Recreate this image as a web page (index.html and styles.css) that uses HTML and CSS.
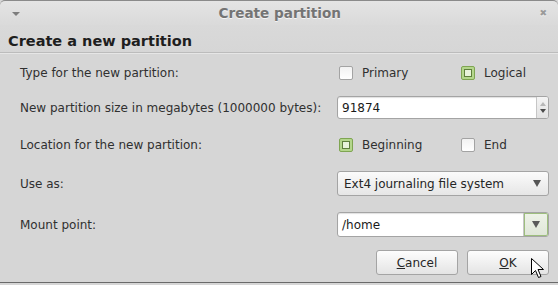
FILE: index.html
```html
<!DOCTYPE html>
<html>
    <head>
        <meta charset="utf-8">
        <title>Create partition</title>
        <link rel="stylesheet" href="styles.css">
    </head>
    <body>
        <div class="window">
            <div class="titlebar">
                <span class="menuArrow"></span>
                <span class="title">Create partition</span>
                <span class="close">&#10006;</span>
            </div>
            <div class="heading">Create a new partition</div>
            <div class="form">
                <div class="label">Type for the new partition:</div>
                <div class="options">
                    <span class="option"><span class="check"></span>Primary</span>
                    <span class="option"><span class="check on"></span>Logical</span>
                </div>

                <div class="label">New partition size in megabytes (1000000 bytes):</div>
                <div class="spin">
                    <span class="value">91874</span>
                    <span class="spinBtns">
                        <span class="up"></span>
                        <span class="down"></span>
                    </span>
                </div>

                <div class="label">Location for the new partition:</div>
                <div class="options">
                    <span class="option"><span class="check on"></span>Beginning</span>
                    <span class="option"><span class="check"></span>End</span>
                </div>

                <div class="label">Use as:</div>
                <div class="combo">
                    <span>Ext4 journaling file system</span>
                    <span class="arrow"></span>
                </div>

                <div class="label">Mount point:</div>
                <div class="comboEntry">
                    <span class="value">/home</span>
                    <span class="entryBtn"><span class="arrow"></span></span>
                </div>
            </div>
            <div class="buttons">
                <button class="btn"><u>C</u>ancel</button>
                <button class="btn"><u>O</u>K</button>
                <svg class="cursor" width="13" height="21" viewBox="0 0 13 21">
                    <path d="M0.5 0.5 L0.5 16.5 L4.5 12.5 L7.5 19.5 L10 18.5 L7 11.5 L12.5 11.5 Z" fill="#fff" stroke="#000" stroke-width="1"/>
                </svg>
            </div>
            <div class="below">
                <span>Device for boot loader installation:</span>
            </div>
        </div>
    </body>
</html>
```

FILE: styles.css
```css
body {
    margin: 0;
    background: #d6d6d6;
    font-family: "DejaVu Sans", sans-serif;
    font-size: 12px;
    color: #303030;
}
.window {
    width: 558px;
    height: 285px;
    overflow: hidden;
    background: #d6d6d6;
    position: relative;
}
.titlebar {
    height: 25px;
    display: flex;
    align-items: center;
    justify-content: space-between;
    padding: 0 11px 0 12px;
    background: linear-gradient(#e4e4e4, #dadada);
    border-top: 1px solid #8a8a8a;
    border-radius: 5px 5px 0 0;
    box-sizing: border-box;
}
.menuArrow {
    width: 0;
    height: 0;
    border-left: 4px solid transparent;
    border-right: 4px solid transparent;
    border-top: 4px solid #7d7d7d;
    margin-top: 1px;
}
.title {
    font-weight: bold;
    font-size: 13.6px;
    color: #747474;
    text-shadow: 0 1px 0 #f4f4f4;
}
.close {
    font-size: 9px;
    color: #9a9a9a;
    text-shadow: 0 1px 0 #f0f0f0;
}
.heading {
    height: 28px;
    padding-left: 8px;
    font-weight: bold;
    font-size: 14.5px;
    color: #1e1e1e;
    line-height: 32px;
    box-sizing: border-box;
    background: linear-gradient(#d9d9d9, #d6d6d6);
    border-bottom: 1px solid #bcbcbc;
    box-shadow: 0 1px 0 #e6e6e6;
}
.form {
    display: grid;
    grid-template-columns: 317px 212px;
    grid-template-rows: 14px 23px 20px 25px 25px;
    row-gap: 16px;
    padding: 13px 0 0 20px;
    align-items: center;
}
.options {
    display: flex;
    align-items: center;
    padding-left: 2px;
}
.option {
    display: flex;
    align-items: center;
    gap: 9px;
    flex: none;
}
.option:first-child {
    width: 122px;
}
.check {
    width: 12px;
    height: 12px;
    border: 1px solid #a3a3a3;
    border-radius: 2px;
    background: linear-gradient(#f2f2f2, #ffffff);
    display: flex;
    align-items: center;
    justify-content: center;
}
.check.on {
    border-color: #7fa552;
    background: #b4d68c;
}
.check.on::after {
    content: "";
    width: 6px;
    height: 6px;
    border: 1px solid #5f7f3c;
    background: #e8f3da;
}
.spin, .comboEntry {
    height: 23px;
    display: flex;
    background: #fff;
    border: 1px solid #a4a4a4;
    border-radius: 3px;
    box-sizing: border-box;
    box-shadow: inset 0 1px 1px #e0e0e0;
}
.comboEntry {
    height: 25px;
}
.value {
    flex: 1;
    padding-left: 4px;
    display: flex;
    align-items: center;
    font-size: 12px;
    color: #1a1a1a;
}
.spinBtns {
    width: 11px;
    border-left: 1px solid #c6c6c6;
    background: linear-gradient(#f4f4f4, #e2e2e2);
    display: flex;
    flex-direction: column;
    justify-content: space-around;
    align-items: center;
    padding: 3px 0;
    border-radius: 0 2px 2px 0;
}
.up {
    border-left: 3px solid transparent;
    border-right: 3px solid transparent;
    border-bottom: 4px solid #b8b8b8;
}
.down {
    border-left: 3px solid transparent;
    border-right: 3px solid transparent;
    border-top: 4px solid #4a4a4a;
}
.combo {
    height: 25px;
    display: flex;
    align-items: center;
    justify-content: space-between;
    padding: 0 7px 0 6px;
    border: 1px solid #a4a4a4;
    border-radius: 3px;
    background: linear-gradient(#fbfbfb, #e6e6e6);
    box-sizing: border-box;
    font-size: 12px;
    color: #262626;
}
.arrow {
    border-left: 4px solid transparent;
    border-right: 4px solid transparent;
    border-top: 7px solid #555;
}
.entryBtn {
    width: 24px;
    display: flex;
    align-items: center;
    justify-content: center;
    border-left: 1px solid #c6c6c6;
    border-radius: 0 2px 2px 0;
    box-shadow: inset 0 0 0 1px #9dbe7e;
    background: linear-gradient(#eef3e8, #dfe6d8);
}
.entryBtn .arrow {
    border-top-color: #5a5a5a;
}
.buttons {
    display: flex;
    justify-content: flex-end;
    gap: 9px;
    padding: 13px 9px 0 0;
    position: relative;
}
.btn {
    width: 82px;
    height: 25px;
    font-family: "DejaVu Sans", sans-serif;
    font-size: 12px;
    color: #262626;
    border: 1px solid #a4a4a4;
    border-radius: 3px;
    background: linear-gradient(#fdfdfd, #e4e4e4);
    padding: 0;
}
.cursor {
    position: absolute;
    left: 531px;
    top: 21px;
}
.below {
    position: absolute;
    left: 0;
    top: 282px;
    width: 558px;
    height: 3px;
    border-top: 1px solid #6a6a6a;
    overflow: hidden;
    padding-left: 20px;
    box-sizing: border-box;
    font-size: 12px;
    line-height: 16px;
    color: #111;
}
```
